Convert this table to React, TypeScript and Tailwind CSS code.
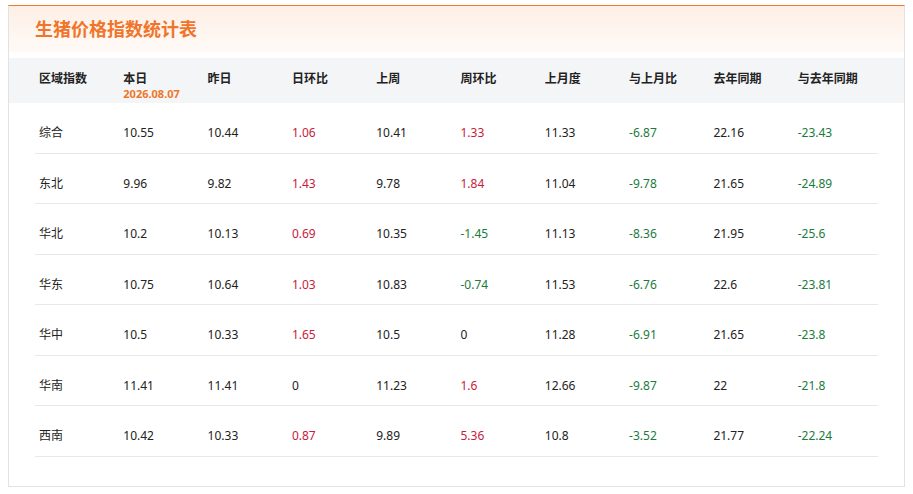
const columns = ["区域指数", "本日", "昨日", "日环比", "上周", "周环比", "上月度", "与上月比", "去年同期", "与去年同期"];

const rows: (string | number)[][] = [
  ["综合", "10.55", "10.44", "1.06", "10.41", "1.33", "11.33", "-6.87", "22.16", "-23.43"],
  ["东北", "9.96", "9.82", "1.43", "9.78", "1.84", "11.04", "-9.78", "21.65", "-24.89"],
  ["华北", "10.2", "10.13", "0.69", "10.35", "-1.45", "11.13", "-8.36", "21.95", "-25.6"],
  ["华东", "10.75", "10.64", "1.03", "10.83", "-0.74", "11.53", "-6.76", "22.6", "-23.81"],
  ["华中", "10.5", "10.33", "1.65", "10.5", "0", "11.28", "-6.91", "21.65", "-23.8"],
  ["华南", "11.41", "11.41", "0", "11.23", "1.6", "12.66", "-9.87", "22", "-21.8"],
  ["西南", "10.42", "10.33", "0.87", "9.89", "5.36", "10.8", "-3.52", "21.77", "-22.24"],
];

// columns holding a change value get red / green
const changeCols = [3, 5, 7, 9];

function tone(v: string, i: number) {
  if (!changeCols.includes(i)) return "text-[#222]";
  const n = parseFloat(v);
  if (n > 0) return "text-[#c8203c]";
  if (n < 0) return "text-[#1b7b3c]";
  return "text-[#222]";
}

export default function App() {
  return (
    <div
      className="w-[913px] h-[494px] bg-white px-[8px] pt-[5px]"
      style={{ fontFamily: '"Noto Sans", "Noto Sans CJK SC", sans-serif' }}
    >
      <div className="border border-[#e2e2e2] border-t-[#ee7a30] pb-[29px]">
        <div className="h-[46px] flex items-center pl-[26px] bg-gradient-to-b from-[#fdefe5] to-[#fffaf7]">
          <h1 className="text-[18px] font-bold text-[#f0752a] leading-none">生猪价格指数统计表</h1>
        </div>

        <div className="mt-[6px] h-[45px] bg-[#f4f5f7]">
          <div className="mx-[26px] grid grid-cols-10 pt-[13px]">
            {columns.map((c, i) => (
              <div key={c} className="pl-[4px]">
                <div className="text-[12px] leading-[16px] font-bold text-[#222]">{c}</div>
                {i === 1 && (
                  <div className="text-[11px] leading-[14px] font-bold text-[#f0752a]">2026.08.07</div>
                )}
              </div>
            ))}
          </div>
        </div>

        <div className="mx-[26px]">
          {rows.map((r) => (
            <div
              key={r[0] as string}
              className="grid grid-cols-10 h-[50.5px] border-b border-[#e8e8e8] items-center pt-[11px]"
            >
              {r.map((v, i) => (
                <div key={i} className={`pl-[4px] text-[12px] leading-[16px] ${tone(v as string, i)}`}>
                  {v}
                </div>
              ))}
            </div>
          ))}
        </div>
      </div>
    </div>
  );
}
